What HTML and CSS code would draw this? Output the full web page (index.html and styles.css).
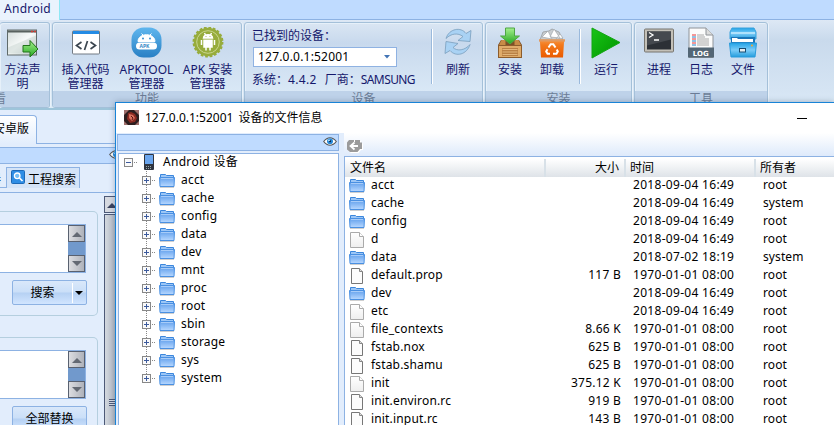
FILE: index.html
```
<!DOCTYPE html>
<html lang="zh-CN">
<head>
<meta charset="utf-8">
<title>Android</title>
<link rel="stylesheet" href="styles.css">
</head>
<body>
<svg class="defs" width="0" height="0">
  <defs>
    <linearGradient id="gFolder" x2="0" y2="1"><stop offset="0" stop-color="#62a0ec"/><stop offset="1" stop-color="#b8d8ff"/></linearGradient>
    <linearGradient id="gPage" x2="0" y2="1"><stop offset="0" stop-color="#fff"/><stop offset="1" stop-color="#eee"/></linearGradient>
    <linearGradient id="gGreen" x2="0" y2="1"><stop offset="0" stop-color="#a5f08e"/><stop offset="1" stop-color="#25a820"/></linearGradient>
    <linearGradient id="gPlay" x2="1" y2="1"><stop offset="0" stop-color="#18c416"/><stop offset="1" stop-color="#009400"/></linearGradient>
    <linearGradient id="gWin" x2="1" y2="1"><stop offset="0" stop-color="#d4dcda"/><stop offset=".5" stop-color="#f7faf9"/><stop offset="1" stop-color="#b8c4c2"/></linearGradient>
    <linearGradient id="gSky" x2="0" y2="1"><stop offset="0" stop-color="#5fb6ee"/><stop offset="1" stop-color="#2980c4"/></linearGradient>
    <linearGradient id="gCab" x2="0" y2="1"><stop offset="0" stop-color="#22a4e8"/><stop offset=".5" stop-color="#7bcbf7"/><stop offset="1" stop-color="#249ddd"/></linearGradient>
    <linearGradient id="gOrange" x2="0" y2="1"><stop offset="0" stop-color="#f79646"/><stop offset=".3" stop-color="#f37a1c"/><stop offset="1" stop-color="#ea5a00"/></linearGradient>
    <symbol id="folder" viewBox="0 0 16 14"><path d="M1.500 4V.5h5l1 1h7V4" fill="#9cc6f6" stroke="#3b86dc"/><path d="M.5 3.500h15l-.5 9H1z" fill="url(#gFolder)" stroke="#4a90e2"/><path d="M2 4.500h12" stroke="#a8ccf8"/><path d="M1 13.500h14" stroke="#cfcfcf"/></symbol>
    <symbol id="page" viewBox="0 0 14 16"><path d="M.5.5h9l4 4v11H.5z" fill="url(#gPage)" stroke="#aaa"/><path d="M9.500.5v4h4" fill="#fff" stroke="#aaa"/></symbol>
    <symbol id="doc" viewBox="0 0 14 16"><path d="M1.500.5h8l3 3v12h-11z" fill="#fcfcfc" stroke="#777"/><path d="M9.500.5v3h3" fill="#ddd" stroke="#888"/></symbol>
    <symbol id="eye" viewBox="0 0 14 9"><path d="M.7 4.500Q3.500.7 7 .7t6.300 3.800Q10.500 8.200 7 8.200T.7 4.500z" fill="#fff" stroke="#555" stroke-width="1.100"/><circle cx="7" cy="4.300" r="3" fill="#2688d8"/><circle cx="7" cy="4.300" r="1" fill="#0b1c34"/><circle cx="6" cy="3.300" r=".9" fill="#bfe6ff"/></symbol>
    <symbol id="up" viewBox="0 0 10 6"><path d="M0 6 5 1l5 5z"/></symbol>
    <symbol id="down" viewBox="0 0 10 6"><path d="M0 0h10L5 5z"/></symbol>
  </defs>
</svg>

<div class="app">
  <div class="tabstrip"><div class="tab">Android</div></div>
  <div class="ribbon">
    <section class="group g-view">
      <div class="items">
        <div class="item"><svg width="31" height="31" viewBox="0 0 31 31"><rect x=".5" y="2.500" width="29" height="25" fill="url(#gWin)" stroke="#606b6a"/><path d="M1 4h28" stroke="#59625f" stroke-width="2"/><path d="M24 4h2m1 0h2" stroke="#d23c34" stroke-width="1.500"/><path d="M1 20 29 8v18H1z" fill="#c8d3d0" opacity=".5"/><path d="M16 18h7v-5l8 8.500-8 8v-5h-7z" fill="url(#gGreen)" stroke="#23741a"/></svg><span>方法声<br>明</span></div>
      </div>
      <div class="caption">查看</div>
    </section>
    <section class="group g-func">
      <div class="items">
        <div class="item w61"><svg width="30" height="31" viewBox="0 0 30 31"><rect x="1.500" y="3.500" width="27" height="23" rx="1" fill="#fff" stroke="#737b83"/><path d="M2 5h26" stroke="#248be4" stroke-width="3"/><path d="m10.500 14.500-5 3.500 5 3.500m9-7 5 3.500-5 3.500m-3-8-3 9" fill="none" stroke="#3c4650" stroke-width="1.700"/></svg><span>插入代码<br>管理器</span></div>
        <div class="item w61"><svg width="31" height="31" viewBox="0 0 31 31"><rect x=".5" y="0" width="30" height="30" rx="12" fill="url(#gSky)"/><path d="M7 14c0-9 17-9 17 0zM10.500 6l2 2m8-2-2 2" fill="#fff" stroke="#fff"/><circle cx="12" cy="11" r="1" fill="#398fce"/><circle cx="19" cy="11" r="1" fill="#398fce"/><rect x="5" y="15" width="21" height="7" rx="3.500" fill="#fff"/><text x="8.500" y="20.500" class="apk">APK</text></svg><span>APKTOOL<br>管理器</span></div>
        <div class="item w61"><svg width="32" height="32" viewBox="0 0 32 32"><circle cx="16" cy="15" r="14.200" fill="#97ac3c" stroke="#97ac3c" stroke-width="2.500" stroke-dasharray="2.700 1.760"/><circle cx="16" cy="15" r="11.300" fill="none" stroke="#c9d68e"/><path d="M11.500 11.500c0-5 9-5 9 0zM12 13h8v7h-8zM9.500 13v5m13-5v5M14 20v3.500m4-3.500v3.500M12.500 6l1 2m6-2-1 2" fill="#fff" stroke="#fff" stroke-width="1.500"/><path d="M13.500 9.500h1m3 0h1M11 12.200h10" stroke="#97ac3c" stroke-width=".8"/></svg><span>APK 安装<br>管理器</span></div>
      </div>
      <div class="caption">功能</div>
    </section>
    <section class="group g-dev">
      <div class="items">
        <div class="device">
          <div class="found">已找到的设备：</div>
          <div class="combo"><span>127.0.0.1:52001</span><svg width="6" height="4" viewBox="0 0 6 4"><path d="M0 0h6L3 3.500z" fill="#4274b5"/></svg></div>
          <div class="sysinfo">系统：<span>4.4.2</span><span class="vendor">厂商：</span><span class="maker">SAMSUNG</span></div>
        </div>
        <i class="sep"></i>
        <div class="item w50"><svg width="29" height="31" viewBox="0 0 29 31"><g fill="#a9d2f4" stroke="#7a9ebc" stroke-width=".8"><path d="M2 11C5 1 17-1 22 6l5-3-1 11-12-1 5-4C14 5 7 6 2 11z"/><path d="M26 17c-3 10-14 13-20 6l-5 3 1-12 12 2-5 4c4 4 12 3 17-3z"/></g></svg><span>刷新</span></div>
      </div>
      <div class="caption">设备</div>
    </section>
    <section class="group g-inst">
      <div class="items">
        <div class="item w42"><svg width="26" height="32" viewBox="0 0 26 32"><path d="M4 13h18l3 5v13H1V18z" fill="#7d5027"/><path d="M4.500 13h4v5H2zM21.500 13h-4v5H24z" fill="#c78b47"/><path d="M1.500 18.500h23v12h-23z" fill="#dfab6a" stroke="#8c5c2c"/><path d="M5 21h16v8H5z" fill="#b98045"/><path d="M5.500 22.500h15M5.500 25h15M5.500 27.500h15" stroke="#e2b67c"/><path d="M8.500 1h9v8h5L13 17 3.500 9h5z" fill="url(#gGreen)" stroke="#4fa545"/></svg><span>安装</span></div>
        <div class="item w42"><svg width="28" height="32" viewBox="0 0 28 32"><path d="M2 13 5 5l6-1 3-2 7 3 4 8z" fill="#c9cdd0" stroke="#a2a7ab"/><path d="m4 10 6-6 4 8zM12 10l4-8 6 9zM18 12l4-5 3 4z" fill="#fff" stroke="#a2a8ad" stroke-width=".7"/><path d="M1 12.500h26l-1 3-1 15H3l-1-15z" fill="url(#gOrange)"/><path d="M1 13.500h26" stroke="#df9961" stroke-width="2"/><path d="m10.500 20.500 2.200-3.300h2.600l2.200 3.300m1.300 2 1 2-1.300 2.200H15m-3 0H9.500l-1.300-2.200 1.300-2.200" fill="none" stroke="#fff" stroke-width="2"/></svg><span>卸载</span></div>
        <i class="sep wide"></i>
        <div class="item w50"><svg width="30" height="32" viewBox="0 0 30 32"><path d="M1 1v30l28-15.500z" fill="url(#gPlay)" stroke="#13a513"/></svg><span>运行</span></div>
      </div>
      <div class="caption">安装</div>
    </section>
    <section class="group g-tool">
      <div class="items">
        <div class="item w42"><svg width="30" height="31" viewBox="0 0 30 31"><rect x=".5" y="1.500" width="29" height="23" rx="1" fill="#c3c0b8" stroke="#77756f"/><rect x="3" y="4" width="24" height="18" fill="#2c3036"/><path d="M3 4h24v8L3 18z" fill="#45494f"/><path d="m5 5 4 2.500L5 10m5 2.500h5" fill="none" stroke="#fff" stroke-width="1.300"/></svg><span>进程</span></div>
        <div class="item w42"><svg width="26" height="31" viewBox="0 0 26 31"><path d="M1 .5h17l7 7v22.500H1z" fill="#fbfbfb" stroke="#909499"/><path d="M18 .5v7h7" fill="#ddd" stroke="#909499"/><path d="M4 7.500h4m-4 4h4m-4 4h4" stroke="#e33"/><path d="M4 9.500h4m-4 4h4m-4 4h4" stroke="#28c"/><path d="M9 7.500h7m-7 2h8m-8 2h12m-12 2h12m-12 2h12m-12 2h12" stroke="#aaa"/><path d="M0 20h26v10H0z" fill="#536675"/><text x="4.800" y="28" class="log">LOG</text></svg><span>日志</span></div>
        <div class="item w42"><svg width="28" height="32" viewBox="0 0 28 32"><path d="M3 1h22l2 4v7H1V5z" fill="url(#gCab)" stroke="#3ba2dc"/><path d="M2 6h24" stroke="#b0e2fc" stroke-width="2"/><path d="M2 10h24v7H2z" fill="#1a75b8"/><path d="M3 15v-4h5l1 1h15v3" fill="#fff"/><path d="M.5 16h27L26 30H2z" fill="url(#gCab)" stroke="#2b9bdb"/><rect x="10.500" y="21.500" width="6" height="3.500" fill="#e7edf0" stroke="#174c72"/><circle cx="23" cy="18.500" r="1" fill="#f5a72a"/></svg><span>文件</span></div>
      </div>
      <div class="caption">工具</div>
    </section>
  </div>

  <div class="side">
    <div class="doctabs"><div class="doctab">安卓版</div></div>
    <div class="bluebar"><svg width="14" height="9"><use href="#eye"/></svg></div>
    <div class="subtabs">
      <div class="prev">器</div>
      <div class="subtab"><svg width="14" height="14" viewBox="0 0 14 14"><rect x=".5" y=".5" width="13" height="13" rx="1" fill="#2f8ee5" stroke="#1d69b7"/><circle cx="6.200" cy="5.800" r="2.800" fill="#73bdf5" stroke="#fff" stroke-width="1.300"/><path d="m8.500 8 3 3" stroke="#fff" stroke-width="1.700"/></svg><span>工程搜索</span></div>
    </div>
    <div class="work">
      <div class="boxes">
        <div class="box b1">
          <div class="area"><div class="sb"><b><svg width="10" height="6"><use href="#up"/></svg></b><b><svg width="10" height="6"><use href="#down"/></svg></b></div></div>
          <div class="btn split"><span>搜索</span><em><svg width="8" height="5" viewBox="0 0 8 5"><path d="M0 0h8L4 4z"/></svg></em></div>
        </div>
        <div class="box b2">
          <div class="area"><div class="sb"><b><svg width="10" height="6"><use href="#up"/></svg></b><b><svg width="10" height="6"><use href="#down"/></svg></b></div></div>
          <div class="btn"><span>全部替换</span></div>
        </div>
      </div>
      <div class="vscroll"><div class="vup"><svg width="10" height="6"><use href="#up"/></svg></div><div class="thumb"><i></i></div></div>
    </div>
  </div>
</div>

<div class="dialog">
  <div class="title">
    <svg width="15" height="15" viewBox="0 0 15 15"><rect width="15" height="15" fill="#2c1e1f"/><path d="M0 0h5L0 5zM10 0h5v5zM0 11l4 4H0zM15 11l-4 4h4z" fill="#a0706d"/><path d="m4 3 3-1 4 2 2 4-2 4-5 1-3-4z" fill="#8a2a22"/><path d="m5 4 4 1 2 3-3 3-3-3z" fill="#d8705e"/><path d="m7 6 2 2-1 2" stroke="#5a1412" fill="none"/></svg>
    <span>127.0.0.1:52001</span><span class="zh">设备的文件信息</span>
    <i class="min"></i>
  </div>
  <div class="panes">
    <div class="left">
      <div class="lbar"><svg width="14" height="9"><use href="#eye"/></svg></div>
      <div class="tree" id="tree">
        <div class="root"><i class="pm minus"></i><i class="dots"></i><svg width="10" height="16" viewBox="0 0 10 16"><rect width="10" height="16" rx="1" fill="#303540"/><path d="M1 1h8v9H1z" fill="#6ba6ee"/><path d="M2 12.500h6m-6 2h6" stroke="#9aa" stroke-dasharray="1 1"/></svg><span>Android 设备</span></div>
      </div>
    </div>
    <div class="right">
      <div class="toolbar"><svg width="16" height="14" viewBox="0 0 16 14"><path d="M3 1h11v2.500h2V10h-2l-2.500 3H4l-3-2.500z" fill="#fff"/><path d="M2 0h11v2.500h2v6.500h-2l-2.500 3H3L0 9.500v-7z" fill="#9b9b9b"/><path d="m7.500 2.500-4 3.500 4 3.500M4 6h7" fill="none" stroke="#fff" stroke-width="1.800"/><path d="M7.500 0v2" stroke="#fff"/></svg></div>
      <div class="table">
        <div class="row head"><span class="name">文件名</span><span class="size">大小</span><span class="time">时间</span><span class="own">所有者</span></div>
        <div id="rows"></div>
      </div>
    </div>
  </div>
</div>
<script src="app.js"></script>
</body>
</html>
```
FILE: styles.css
```
* { box-sizing: border-box; }
body { margin: 0; width: 834px; height: 425px; overflow: hidden; position: relative; background: #e2edfc; font: 12px/14px "Noto Sans", "Noto Sans CJK SC", sans-serif; color: #000; }
svg { display: block; flex: none; }
i, em, b { font-style: normal; display: block; flex: none; }
.defs { position: absolute; }
.app { height: 425px; display: flex; flex-direction: column; }

.tabstrip { height: 20px; flex: none; background: #bfdbff; border-bottom: 1px solid #8db2e3; display: flex; }
.tab { width: 60px; height: 20px; padding: 2px 0 0 4px; background: #eaf3fd; border-right: 1px solid #8fe8f5; color: #15186c; letter-spacing: .3px; }
.ribbon { height: 90px; flex: none; display: flex; gap: 2px; padding-top: 2px; background: linear-gradient(#dde8f5 0, #c9daec 20px, #d5e4f3 70px, #dcebf7); border-bottom: 2px solid #9ec5da; }
.group { height: 86px; display: flex; flex-direction: column; border: 1px solid #a4c0d9; border-radius: 3px; background: linear-gradient(#dae6f3, #c8d9ed 20px, #d9e8f6 68px); box-shadow: inset 1px 1px #e6f0f9, 1px 0 #e9f2fa; overflow: hidden; }
.g-view { width: 50px; border-left: 0; }
.g-func { width: 190px; }
.g-dev { width: 239px; }
.g-inst { width: 147px; }
.g-tool { width: 134px; }
.items { height: 68px; flex: none; display: flex; padding-top: 4px; }
.item { display: flex; flex-direction: column; align-items: center; justify-content: space-between; text-align: center; color: #15186c; height: 64px; white-space: nowrap; flex: none; }
.item svg { height: 32px; }
.item span { height: 28px; }
.g-view .item { width: 45px; }
.g-func .items { padding-left: 2px; }
.w61 { width: 61px; }
.w42 { width: 42px; }
.w50 { width: 50px; }
.g-inst .items, .g-tool .items { padding-left: 3px; }
.caption { flex: 1; background: #bed2e9; color: #6b7c96; text-align: center; line-height: 15px; }
.g-view .caption { white-space: nowrap; direction: rtl; padding-right: 43px; }
.apk { font: bold 5px "Noto Sans"; fill: #3589c6; }
.log { font: bold 7px "DejaVu Sans", sans-serif; fill: #fff; }
.device { width: 186px; flex: none; padding-left: 8px; color: #15186c; }
.found { height: 20px; padding-top: 2px; margin-left: -1px; }
.combo { width: 144px; height: 20px; background: #fff; border: 1px solid #8fb2e2; display: flex; align-items: center; justify-content: space-between; padding: 0 6px 0 4px; color: #000; letter-spacing: .2px; }
.sysinfo { margin: 6px 0 0 -1px; white-space: nowrap; }
.sysinfo span { letter-spacing: .35px; }
.sysinfo .vendor { margin-left: 8px; letter-spacing: 0; }
.sysinfo .maker { letter-spacing: -.6px; }
.sep { width: 2px; height: 55px; margin-top: 2px; background: #9ab9dc; border-right: 1px solid #fff; }
.sep.wide { margin-left: 6px; }

.side { width: 116px; flex: 1; display: flex; flex-direction: column; overflow: hidden; }
.doctabs { height: 34px; flex: none; border-bottom: 1px solid #8db2e3; padding-top: 5px; }
.doctab { width: 37px; height: 29px; border: 1px solid #8db2e3; border-width: 1px 1px 0 0; border-radius: 0 4px 0 0; background: linear-gradient(#fff, #e2edfc); direction: rtl; white-space: nowrap; padding: 6px 7px 0 0; }
.bluebar { height: 17px; flex: none; margin-top: 3px; background: #bfdbff; border: 1px solid #8db2e3; border-width: 1px 0; padding: 2px 0 0 109px; }
.subtabs { height: 29px; flex: none; display: flex; padding-top: 3px; border-bottom: 1px solid #8db2e3; }
.prev { width: 6px; height: 21px; overflow: hidden; direction: rtl; padding: 5px 5px 0 0; border-bottom: 1px solid #8db2e3; }
.subtab { width: 74px; height: 21px; border: 1px solid #8db2e3; border-bottom: 0; background: #d4e4f8; display: flex; gap: 3px; padding: 2px 0 0 4px; white-space: nowrap; }
.subtab span { padding-top: 3px; }
.work { flex: 1; display: flex; }
.boxes { width: 104px; }
.box { width: 98px; height: 105px; border: 1px solid #b5cfdf; border-left: 0; border-radius: 0 5px 5px 0; padding-top: 12px; }
.b1 { margin-top: 18px; }
.b2 { margin-top: 21px; }
.area { width: 86px; height: 49px; background: #fff; border: 1px solid #8db2e3; border-left: 0; padding-left: 68px; }
.sb { height: 47px; background: #7199cc; display: flex; flex-direction: column; justify-content: space-between; }
.sb b { height: 17px; border: 1px solid #596170; background: linear-gradient(90deg, #dcdde1, #aeb2ba); padding: 5px 0 0 3px; fill: #636973; }
.btn { margin: 7px 0 0 12px; width: 75px; height: 25px; border: 1px solid #8db2e3; border-radius: 2px; background: linear-gradient(#dae8fa, #cadff8 11px, #b6d1f3 12px, #d1e5ff); display: flex; align-items: center; justify-content: center; }
.split span { flex: 1; text-align: center; }
.split em { width: 14px; height: 20px; border-left: 1px solid #fff; padding: 8px 0 0 2px; }
.vscroll { width: 12px; padding-top: 3px; }
.vup { height: 17px; border: 1px solid #4d5977; background: #d6d9e0; padding: 5px 0 0 2px; fill: #39415c; }
.thumb { height: 230px; margin-top: 1px; border-left: 1px solid #4d5977; border-top: 1px solid #4d5977; background: linear-gradient(90deg, #d3d8df, #afb6c1); padding: 184px 0 0 4px; }
.thumb i { height: 7px; background: repeating-linear-gradient(#4d5977 0 1px, #d8dce4 1px 2px); }

.dialog { position: absolute; left: 115px; top: 102px; width: 719px; height: 323px; border: 1px solid #1883d7; border-width: 1px 0 0 1px; background: #e2edfc; display: flex; flex-direction: column; overflow: hidden; box-shadow: 0 0 6px rgba(40, 60, 90, .35); }
.title { height: 30px; flex: none; background: #fff; display: flex; align-items: center; padding: 0 0 1px 8px; }
.title span { margin-left: 6px; letter-spacing: 0; }
.title .zh { margin-left: 5px; }
.min { width: 10px; height: 1px; background: #000; margin: 1px 27px 0 auto; }
.panes { flex: 1; display: flex; min-height: 0; }
.left { width: 228px; flex: none; padding-left: 1px; }
.lbar { width: 222px; height: 17px; margin-top: 1px; background: #bfdbff; border: 1px solid #8db2e3; display: flex; justify-content: flex-end; padding: 2px 1px; }
.tree { width: 221px; height: 280px; margin: 2px 0 0 1px; background: #fff; border: 1px solid #8db2e3; }
.root, .node { height: 18px; display: flex; align-items: center; }
.root { padding-left: 5px; margin-top: -1px; }
.root svg { margin: 0 9px 0 6px; }
.root span { letter-spacing: .3px; }
.node span { letter-spacing: .2px; }
.node { padding-left: 23px; }
.pm { width: 9px; height: 9px; border: 1px solid #888; background: linear-gradient(#3c5a9c, #3c5a9c) center / 5px 1px no-repeat, #fafafa; }
.pm.plus { background: linear-gradient(#3c5a9c, #3c5a9c) center / 5px 1px no-repeat, linear-gradient(#3c5a9c, #3c5a9c) center / 1px 5px no-repeat, #fafafa; }
.line { height: 18px; width: 9px; display: flex; align-items: center; background: repeating-linear-gradient(#888 0 1px, transparent 1px 2px) 4px 0 / 1px 100% no-repeat; }
.node:last-child .line { background-size: 1px 9px; }
.dots { width: 5px; height: 1px; background: repeating-linear-gradient(90deg, transparent 0 1px, #888 1px 2px); }
.node svg { margin: 2px 6px 0 3px; }
.right { flex: 1; min-width: 0; background: #fff; }
.toolbar { height: 23px; background: linear-gradient(#fff, #deeafb); padding: 7px 0 0 3px; }
.table { border: 1px solid #8db2e3; border-right: 0; height: 290px; padding-top: 2px; }
.row { display: flex; align-items: center; height: 18px; white-space: nowrap; }
.row > span { flex: none; }
#rows { margin-top: -1px; }
.name { width: 201px; display: flex; align-items: center; padding-left: 4px; letter-spacing: .17px; }
.name svg { width: 16px; margin: 2px 6px 0 0; }
.size { width: 80px; text-align: right; padding-right: 5px; letter-spacing: .25px; }
.time { width: 130px; padding-left: 7px; letter-spacing: .3px; }
.own { width: 78px; padding-left: 7px; letter-spacing: .1px; }
.head { background: linear-gradient(#fff, #dee3e8); }
.head > span { height: 18px; line-height: 17px; border-right: 2px solid #d8e1e8; letter-spacing: 0; }
.head .name { padding: 0 0 1px 5px; }
.head .size { padding-right: 5px; }
.head .time, .head .own { padding-left: 4px; }
.head .own { border: 0; }
```
FILE: app.js
```
const icon = (id, w, h) => `<svg width="${w}" height="${h}"><use href="#${id}"/></svg>`;

const dirs = ['acct', 'cache', 'config', 'data', 'dev', 'mnt', 'proc', 'root', 'sbin', 'storage', 'sys', 'system'];
document.getElementById('tree').insertAdjacentHTML('beforeend', dirs.map(d =>
  `<div class="node"><i class="line"><i class="pm plus"></i></i><i class="dots"></i>${icon('folder', 16, 14)}<span>${d}</span></div>`).join(''));

const t18 = '2018-09-04 16:49', t70 = '1970-01-01 08:00';
const files = [
  ['folder', 'acct', '', t18, 'root'],
  ['folder', 'cache', '', t18, 'system'],
  ['folder', 'config', '', t18, 'root'],
  ['page', 'd', '', t18, 'root'],
  ['folder', 'data', '', '2018-07-02 18:19', 'system'],
  ['doc', 'default.prop', '117 B', t70, 'root'],
  ['folder', 'dev', '', t18, 'root'],
  ['page', 'etc', '', t18, 'root'],
  ['page', 'file_contexts', '8.66 K', t70, 'root'],
  ['doc', 'fstab.nox', '625 B', t70, 'root'],
  ['doc', 'fstab.shamu', '625 B', t70, 'root'],
  ['page', 'init', '375.12 K', t70, 'root'],
  ['doc', 'init.environ.rc', '919 B', t70, 'root'],
  ['doc', 'init.input.rc', '143 B', t70, 'root']
];
document.getElementById('rows').innerHTML = files.map(([k, n, s, t, o]) =>
  `<div class="row"><span class="name">${icon(k, 16, k === 'folder' ? 14 : 16)}${n}</span><span class="size">${s}</span><span class="time">${t}</span><span class="own">${o}</span></div>`).join('');
```
